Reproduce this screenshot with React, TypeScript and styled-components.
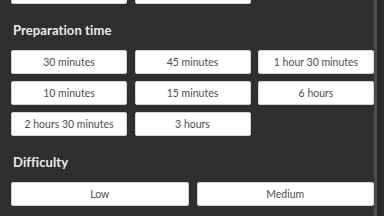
import React from "react";
import styled, { createGlobalStyle } from "styled-components";

const GlobalStyle = createGlobalStyle`
  html, body {
    margin: 0;
    padding: 0;
    background: #2f2f2f;
  }
  body {
    font-family: Lato, "Noto Sans", sans-serif;
  }
`;

// first group is scrolled almost out of view, only its bottom edge shows
const sections = [
  {
    title: null as string | null,
    cols: 3,
    options: ["", ""],
  },
  {
    title: "Preparation time",
    cols: 3,
    options: [
      "30 minutes",
      "45 minutes",
      "1 hour 30 minutes",
      "10 minutes",
      "15 minutes",
      "6 hours",
      "2 hours 30 minutes",
      "3 hours",
    ],
  },
  {
    title: "Difficulty",
    cols: 2,
    options: ["Low", "Medium"],
  },
];

const App = () => {
  return (
    <>
      <GlobalStyle />
      <Page>
        <Panel>
          <Content>
            {sections.map((s, i) => (
              <Section key={i}>
                {s.title && <Heading>{s.title}</Heading>}
                <Grid $cols={s.cols}>
                  {s.options.map((o, j) => (
                    <Option key={j}>{o}</Option>
                  ))}
                </Grid>
              </Section>
            ))}
          </Content>
        </Panel>
        <Scrollbar>
          <Thumb />
        </Scrollbar>
      </Page>
    </>
  );
};

const Page = styled.div`
  display: flex;
  width: 384px;
  height: 216px;
  overflow: hidden;
  background: #2f2f2f;
`;

const Panel = styled.div`
  flex: 1;
  padding-left: 11px;
  overflow: hidden;
`;

const Content = styled.div`
  margin-top: -20px;
  width: 363px;
`;

const Section = styled.div`
  display: flex;
  flex-direction: column;
`;

const Heading = styled.h3`
  margin: 16px 0 10px 2px;
  font-size: 13px;
  line-height: 20px;
  font-weight: 700;
  color: #ececec;
  letter-spacing: 0.1px;
`;

const Grid = styled.div<{ $cols: number }>`
  display: grid;
  grid-template-columns: repeat(${(p) => p.$cols}, 1fr);
  column-gap: ${(p) => (p.$cols === 2 ? "8px" : "7.5px")};
  row-gap: 7px;
`;

const Option = styled.button`
  height: 24px;
  padding: 0;
  background: #fff;
  border: 1px solid #d4d4d4;
  border-radius: 2px;
  font-family: Lato, "Noto Sans", sans-serif;
  font-size: 10.5px;
  color: #4e4e4e;
  text-align: center;
`;

const Scrollbar = styled.div`
  width: 10px;
  display: flex;
  background: #2a2a2a;
`;

const Thumb = styled.div`
  width: 3px;
  background: #4d4d4d;
`;

export default App;
